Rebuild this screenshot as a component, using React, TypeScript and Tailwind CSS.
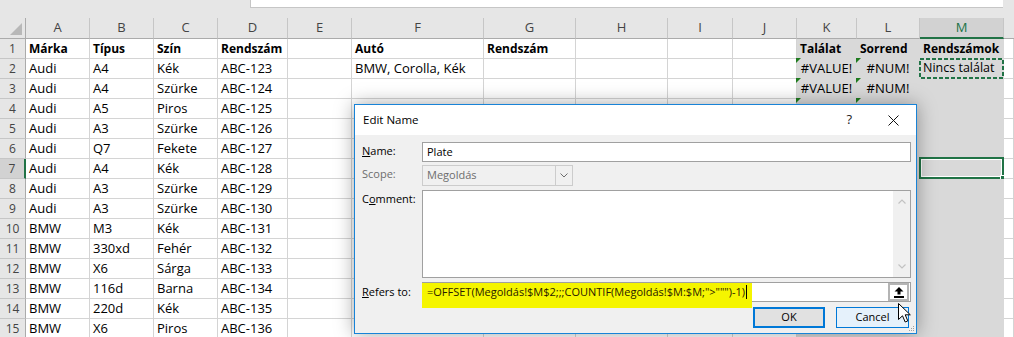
import React from 'react';

const LETTERS = ['A', 'B', 'C', 'D', 'E', 'F', 'G', 'H', 'I', 'J', 'K', 'L', 'M', ''];

const DATA: string[][] = [
  ['Márka', 'Típus', 'Szín', 'Rendszám'],
  ['Audi', 'A4', 'Kék', 'ABC-123'],
  ['Audi', 'A4', 'Szürke', 'ABC-124'],
  ['Audi', 'A5', 'Piros', 'ABC-125'],
  ['Audi', 'A3', 'Szürke', 'ABC-126'],
  ['Audi', 'Q7', 'Fekete', 'ABC-127'],
  ['Audi', 'A4', 'Kék', 'ABC-128'],
  ['Audi', 'A3', 'Szürke', 'ABC-129'],
  ['Audi', 'A3', 'Szürke', 'ABC-130'],
  ['BMW', 'M3', 'Kék', 'ABC-131'],
  ['BMW', '330xd', 'Fehér', 'ABC-132'],
  ['BMW', 'X6', 'Sárga', 'ABC-133'],
  ['BMW', '116d', 'Barna', 'ABC-134'],
  ['BMW', '220d', 'Kék', 'ABC-135'],
  ['BMW', 'X6', 'Piros', 'ABC-136'],
];

type Cell = { text?: string; bold?: boolean; center?: boolean };

function cellFor(row: number, col: number): Cell {
  // col: 0 = A ... 13 = N
  if (col < 4) return { text: DATA[row - 1][col], bold: row === 1 };
  if (row === 1) {
    if (col === 5) return { text: 'Autó', bold: true };
    if (col === 6) return { text: 'Rendszám', bold: true };
    if (col === 10) return { text: 'Találat', bold: true };
    if (col === 11) return { text: 'Sorrend', bold: true };
    if (col === 12) return { text: 'Rendszámok', bold: true };
  }
  if (row === 2 && col === 5) return { text: 'BMW, Corolla, Kék' };
  if (row === 2 && col === 12) return { text: 'Nincs találat' };
  // rows below 3 in K:L sit behind the dialog
  if (row <= 3 && col === 10) return { text: '#VALUE!', center: true };
  if (row <= 3 && col === 11) return { text: '#NUM!', center: true };
  return {};
}

const ErrorMark = () => (
  <div className="absolute -left-[1px] -top-[1px] w-0 h-0 border-t-[5px] border-r-[5px] border-t-[#1e7b1e] border-r-transparent" />
);

const Sheet = () => {
  const rows = Array.from({ length: 15 }, (_, i) => i + 1);
  return (
    <div className="grid grid-cols-[26px_64px_64px_64px_70px_64px_132px_92px_92px_65px_64px_60px_63px_84px_1fr] font-['Open_Sans',sans-serif] text-[13px] text-black">
      {/* column headers */}
      <div className="h-[21px] bg-[#e6e6e6] border-r border-b border-[#ababab] relative">
        <svg className="absolute right-[3px] bottom-[3px]" width="12" height="12" viewBox="0 0 12 12">
          <polygon points="12,0 12,12 0,12" fill="#b8b8b8" />
        </svg>
      </div>
      {LETTERS.map((l, i) =>
        l === 'M' ? (
          <div key={i} className="h-[21px] bg-[#d2d2d2] border-r border-[#c6c6c6] border-b-2 border-b-[#217346] flex items-center justify-center text-[#217346] text-[13px]">
            {l}
          </div>
        ) : (
          <div key={i} className={`h-[21px] bg-[#e6e6e6] border-b border-b-[#ababab] flex items-center justify-center text-[#444] text-[13px] ${i < 13 ? 'border-r border-r-[#c6c6c6]' : ''}`}>
            {l}
          </div>
        )
      )}

      {rows.map((r) => (
        <React.Fragment key={r}>
          {r === 7 ? (
            <div className="h-[20px] bg-[#d2d2d2] border-r-2 border-r-[#217346] border-b border-b-[#c6c6c6] flex items-center justify-center text-[12px] text-[#444]">
              {r}
            </div>
          ) : (
            <div className="h-[20px] bg-[#e6e6e6] border-r border-r-[#ababab] border-b border-b-[#c6c6c6] flex items-center justify-center text-[12px] text-[#444]">
              {r}
            </div>
          )}
          {LETTERS.map((_, c) => {
            const cell = cellFor(r, c);
            const gray = c >= 10 && c <= 12;
            return (
              <div
                key={c}
                className={`h-[20px] relative flex items-center whitespace-nowrap overflow-visible ${
                  gray ? 'bg-[#d9d9d9] border-r border-b border-[#d9d9d9]' : 'bg-white border-r border-b border-[#d4d4d4]'
                } ${cell.center ? 'justify-center' : 'pl-[3px]'}`}
              >
                {(c === 10 || c === 11) && r >= 2 && <ErrorMark />}
                {cell.text && (
                  <span className={cell.bold ? 'font-bold text-[12px]' : r === 2 && c === 12 ? 'text-[12.5px]' : ''}>{cell.text}</span>
                )}
                {r === 2 && c === 12 && (
                  <svg className="absolute -left-[1px] -top-[1px]" width="85" height="21" viewBox="0 0 85 21">
                    <rect x="1" y="1" width="83" height="19" fill="none" stroke="#217346" strokeWidth="2" strokeDasharray="4 2" />
                  </svg>
                )}
                {r === 7 && c === 12 && (
                  <div className="absolute -left-[1px] -top-[2px] -right-[1px] -bottom-[1px] border-2 border-[#217346] shadow-[inset_0_0_0_1px_#ffffff]">
                    <div className="absolute -right-[4px] -bottom-[4px] w-[6px] h-[6px] bg-[#217346] border border-white" />
                  </div>
                )}
              </div>
            );
          })}
        </React.Fragment>
      ))}
    </div>
  );
};

const EditNameDialog = () => (
  <div className="absolute left-[354px] top-[104px] w-[563px] h-[230px] border border-[#1883d7] bg-[#f0f0f0] shadow-[0_0_18px_rgba(0,0,0,0.35)] font-['Open_Sans',sans-serif] text-[11px] text-black">
    {/* title bar */}
    <div className="h-[30px] bg-white flex items-center pl-[8px] pr-[17px]">
      <span className="text-[11.5px]">Edit Name</span>
      <span className="ml-auto text-[13px] text-[#222]">?</span>
      <svg className="ml-[36px]" width="11" height="11" viewBox="0 0 11 11">
        <path d="M0.5 0.5 L10.5 10.5 M10.5 0.5 L0.5 10.5" stroke="#111" strokeWidth="1" />
      </svg>
    </div>

    <div className="pl-[7px] pr-[5px] pt-[7px] flex flex-col">
      {/* Name */}
      <div className="h-[20px] flex items-center">
        <div className="w-[60px] -mt-[2px]">
          <u>N</u>ame:
        </div>
        <div className="flex-1 h-full bg-white border border-[#a0a0a0] flex items-center pl-[4px]">Plate</div>
      </div>

      {/* Scope */}
      <div className="h-[21px] mt-[3px] flex items-center">
        <div className="w-[60px] text-[#6d6d6d] -mt-[2px]">Scope:</div>
        <div className="w-[151px] h-full border border-[#cccccc] bg-[#f0f0f0] flex items-center">
          <span className="pl-[4px] text-[#6d6d6d] flex-1">Megoldás</span>
          <div className="w-[17px] h-full border-l border-[#cccccc] flex items-center justify-center">
            <svg width="8" height="5" viewBox="0 0 8 5">
              <path d="M0.5 0.5 L4 4 L7.5 0.5" fill="none" stroke="#6d6d6d" strokeWidth="1" />
            </svg>
          </div>
        </div>
      </div>

      {/* Comment */}
      <div className="h-[88px] mt-[4px] flex items-start">
        <div className="w-[60px] pt-[1px]">
          C<u>o</u>mment:
        </div>
        <div className="flex-1 h-full bg-white border border-[#a0a0a0] flex justify-end">
          <div className="w-[17px] h-full bg-[#f0f0f0] flex flex-col items-center justify-between py-[8px]">
            <svg width="8" height="5" viewBox="0 0 8 5">
              <path d="M0.5 4.5 L4 1 L7.5 4.5" fill="none" stroke="#c2c2c2" strokeWidth="1.2" />
            </svg>
            <svg width="8" height="5" viewBox="0 0 8 5">
              <path d="M0.5 0.5 L4 4 L7.5 0.5" fill="none" stroke="#c2c2c2" strokeWidth="1.2" />
            </svg>
          </div>
        </div>
      </div>

      {/* Refers to */}
      <div className="h-[20px] mt-[4px] flex items-center">
        <div className="w-[60px]">
          <u>R</u>efers to:
        </div>
        <div className="flex-1 h-full bg-white border border-[#a0a0a0] relative flex items-center">
          <div className="absolute -left-[1px] top-0 w-[330px] h-[25px] bg-[#f5f500]" />
          <span className="relative pl-[4px] text-[11px] text-[#2a1a00] whitespace-nowrap">
            =OFFSET(Megoldás!$M$2;;;COUNTIF(Megoldás!$M:$M;"&gt;""")-1)
          </span>
          <span className="relative w-[1px] h-[14px] bg-black ml-[1px]" />
          <div className="absolute right-[1px] top-0 w-[21px] h-[18px] border-2 border-[#b4b4b4] bg-white flex items-center justify-center">
            <svg width="10" height="11" viewBox="0 0 10 11">
              <path d="M5 0 L9.5 4.5 L6.5 4.5 L6.5 7.5 L3.5 7.5 L3.5 4.5 L0.5 4.5 Z" fill="#000" />
              <rect x="0" y="9" width="10" height="2" fill="#000" />
            </svg>
          </div>
        </div>
      </div>

      {/* Buttons */}
      <div className="h-[21px] mt-[5px] flex justify-end gap-[11px] pr-[2px]">
        <div className="w-[72px] h-full border-2 border-[#0078d7] bg-[#e1e1e1] flex items-center justify-center">OK</div>
        <div className="w-[73px] h-full border border-[#0078d7] bg-[#e5f1fb] flex items-center justify-center">Cancel</div>
      </div>
    </div>

    {/* resize grip */}
    <svg className="absolute right-[1px] bottom-[1px]" width="8" height="8" viewBox="0 0 8 8">
      <rect x="6" y="2" width="1" height="1" fill="#a0a0a0" />
      <rect x="4" y="4" width="1" height="1" fill="#a0a0a0" />
      <rect x="6" y="4" width="1" height="1" fill="#a0a0a0" />
      <rect x="2" y="6" width="1" height="1" fill="#a0a0a0" />
      <rect x="4" y="6" width="1" height="1" fill="#a0a0a0" />
      <rect x="6" y="6" width="1" height="1" fill="#a0a0a0" />
    </svg>
  </div>
);

const App: React.FC = () => {
  return (
    <div className="relative w-[1014px] h-[337px] overflow-hidden bg-white">
      {/* formula bar strip */}
      <div className="h-[18px] bg-[#e6e6e6] pl-[250px]">
        <div className="w-[753px] h-[8px] bg-white border-b border-l border-[#c6c6c6]" />
      </div>

      <Sheet />

      <EditNameDialog />

      {/* mouse pointer */}
      <svg className="absolute left-[898px] top-[303px]" width="14" height="22" viewBox="0 0 14 22">
        <path d="M0.5 0.5 L0.5 16.5 L4.5 12.8 L7.2 19 L9.8 17.9 L7.2 11.8 L12.3 11.8 Z" fill="#fff" stroke="#000" strokeWidth="1" strokeLinejoin="miter" />
      </svg>
    </div>
  );
};

export default App;
